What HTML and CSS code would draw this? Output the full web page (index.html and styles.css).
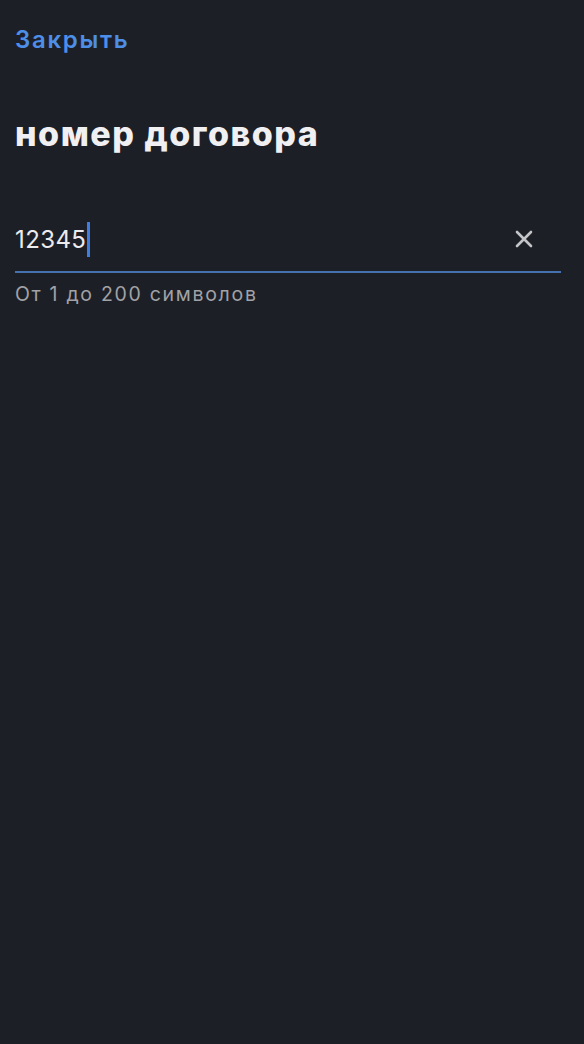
FILE: index.html
```html
<!DOCTYPE html>
<html lang="ru">
<head>
<meta charset="utf-8">
<link rel="stylesheet" href="styles.css">
</head>
<body>
<div class="screen">
  <div class="topbar"><span class="close-link">Закрыть</span></div>
  <h1 class="title">номер договора</h1>
  <div class="field">
    <div class="field-row">
      <div class="value">12345<span class="caret"></span></div>
      <button class="clear" aria-label="clear">
        <svg width="18" height="18" viewBox="0 0 18 18"><path d="M2 2 L16 16 M16 2 L2 16" stroke="#c4c5c8" stroke-width="2.6" stroke-linecap="round"/></svg>
      </button>
    </div>
    <div class="underline"></div>
    <div class="hint">От 1 до 200 символов</div>
  </div>
</div>
</body>
</html>
```
FILE: styles.css
```css
html, body {
  margin: 0;
  padding: 0;
  background: #1d1f27;
  height: 100%;
}
body {
  font-family: Inter, "Noto Sans", sans-serif;
  color: #f2f2f4;
}
.screen {
  padding: 0 23px 0 15px;
}
.topbar {
  height: 80px;
  display: flex;
  align-items: center;
}
.close-link {
  color: #4d8ee6;
  font-size: 24px;
  font-weight: 600;
  line-height: 1;
  letter-spacing: 1.7px;
}
.title {
  margin: 34px 0 0 0;
  font-size: 34px;
  font-weight: 800;
  line-height: 40px;
  color: #f0f0f2;
  letter-spacing: 1.5px;
}
.field {
  margin-top: 63px;
}
.field-row {
  display: flex;
  align-items: center;
  justify-content: space-between;
  height: 44px;
}
.value {
  font-size: 24px;
  font-weight: 400;
  color: #ececee;
  display: flex;
  align-items: center;
  letter-spacing: 0.4px;
}
.caret {
  display: inline-block;
  width: 3px;
  height: 35px;
  background: #3d7ee0;
  margin-left: 1px;
}
.clear {
  background: none;
  border: 0;
  padding: 0;
  margin-right: 28px;
  width: 18px;
  height: 18px;
  display: flex;
}
.underline {
  height: 2px;
  background: #4670b0;
  margin-top: 10px;
}
.hint {
  margin-top: 9px;
  font-size: 19.5px;
  color: #a1a2a6;
  line-height: 24px;
  letter-spacing: 1.7px;
}
```
